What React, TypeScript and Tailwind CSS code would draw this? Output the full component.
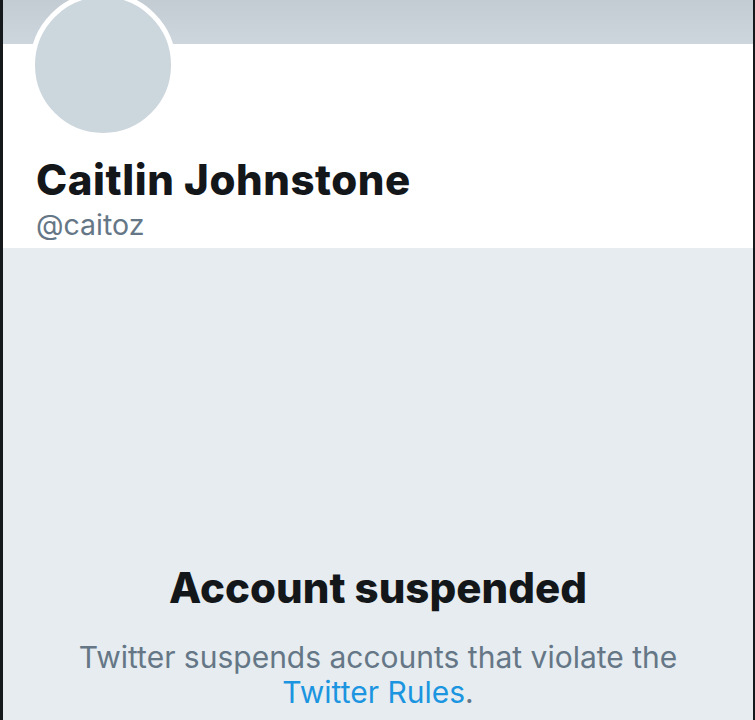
import React from 'react'

const App = () => {
  return (
    <div className="w-[755px] h-[720px] overflow-hidden flex bg-[#e6ecf0]" style={{ fontFamily: 'Inter, "Liberation Sans", sans-serif' }}>
      <div className="w-[3px] bg-[#15191c]" />
      <div className="flex-1 flex flex-col">
        <div className="h-[44px] bg-gradient-to-b from-[#c4ccd3] to-[#cdd6dd]" />
        <div className="h-[204px] bg-white px-[27px]">
          <div className="-mt-[52px] w-[146px] h-[146px] rounded-full border-[5px] border-white bg-[#ccd6dd]" />
          <h1 className="mt-[18px] ml-[6px] text-[42px] leading-[48px] font-extrabold text-[#14171a] tracking-[0.55px]">Caitlin Johnstone</h1>
          <p className="mt-[4px] ml-[6px] text-[28.5px] leading-[34px] text-[#657786]">@caitoz</p>
        </div>
        <div className="flex-1 flex flex-col items-center pt-[316px] text-center">
          <h2 className="text-[42px] leading-[48px] font-extrabold text-[#14171a]">Account suspended</h2>
          <p className="mt-[28px] text-[30px] leading-[35px] text-[#657786]">
            Twitter suspends accounts that violate the
            <br />
            <a href="#" className="text-[#1b95e0]">Twitter Rules</a>.
          </p>
        </div>
      </div>
      <div className="w-[2px] bg-[#15191c]" />
    </div>
  )
}

export default App
